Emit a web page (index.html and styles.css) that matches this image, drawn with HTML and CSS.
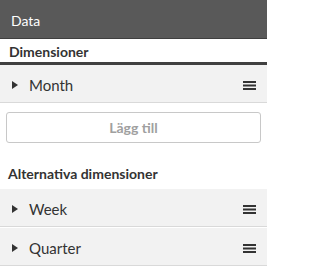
FILE: index.html
```html
<!DOCTYPE html>
<html>
<head>
<meta charset="utf-8">
<link rel="stylesheet" href="styles.css">
</head>
<body>
<div class="panel">
  <div class="header">Data</div>
  <div class="section-title main">Dimensioner</div>
  <div class="row">
    <span class="caret"></span>
    <span class="label">Month</span>
    <svg class="menu" width="13" height="9" viewBox="0 0 13 9"><rect x="0" y="0" width="13" height="2" fill="#333"/><rect x="0" y="3.5" width="13" height="2" fill="#333"/><rect x="0" y="7" width="13" height="2" fill="#333"/></svg>
  </div>
  <div class="btn-wrap"><div class="btn">Lägg till</div></div>
  <div class="section-title alt">Alternativa dimensioner</div>
  <div class="row">
    <span class="caret"></span>
    <span class="label">Week</span>
    <svg class="menu" width="13" height="9" viewBox="0 0 13 9"><rect x="0" y="0" width="13" height="2" fill="#333"/><rect x="0" y="3.5" width="13" height="2" fill="#333"/><rect x="0" y="7" width="13" height="2" fill="#333"/></svg>
  </div>
  <div class="row">
    <span class="caret"></span>
    <span class="label">Quarter</span>
    <svg class="menu" width="13" height="9" viewBox="0 0 13 9"><rect x="0" y="0" width="13" height="2" fill="#333"/><rect x="0" y="3.5" width="13" height="2" fill="#333"/><rect x="0" y="7" width="13" height="2" fill="#333"/></svg>
  </div>
</div>
</body>
</html>
```
FILE: styles.css
```css
html, body {
  margin: 0;
  padding: 0;
  background: #ffffff;
}
.panel {
  width: 267px;
  font-family: "Lato", "Open Sans", sans-serif;
  color: #333;
}
.header {
  height: 39px;
  box-sizing: border-box;
  background: #595959;
  border-bottom: 1px solid #3f3f3f;
  color: #fff;
  font-size: 14px;
  display: flex;
  align-items: center;
  padding-left: 11px;
  padding-top: 2px;
}
.section-title {
  font-weight: bold;
  font-size: 14px;
  display: flex;
  align-items: center;
  padding-left: 9px;
}
.section-title.main {
  height: 22px;
  padding-top: 1px;
  border-bottom: 3px solid #404040;
}
.section-title.alt {
  height: 24px;
  margin-top: 18px;
  margin-bottom: 4px;
  padding-left: 8px;
}
.row {
  height: 38px;
  box-sizing: border-box;
  background: #f2f2f2;
  border-bottom: 1px solid #d9d9d9;
  display: flex;
  align-items: center;
  padding: 3px 11px 0 12px;
  margin-bottom: 1px;
}
.caret {
  width: 0;
  height: 0;
  border-top: 4px solid transparent;
  border-bottom: 4px solid transparent;
  border-left: 6px solid #333;
  margin-right: 11px;
}
.label {
  flex: 1;
  font-size: 15px;
  color: #333;
}
.menu {
  display: block;
}
.btn-wrap {
  padding: 8px 6px 0 6px;
}
.btn {
  height: 29px;
  border: 1px solid #c8c8c8;
  border-radius: 3px;
  display: flex;
  align-items: center;
  justify-content: center;
  color: #a0a0a0;
  font-weight: bold;
  font-size: 14px;
}
```
